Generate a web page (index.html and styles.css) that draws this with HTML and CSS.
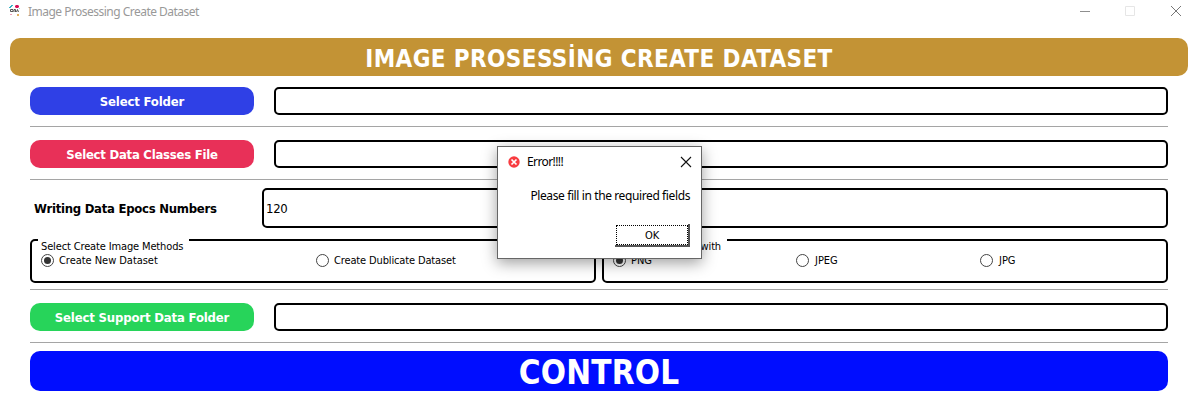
FILE: index.html
```
<!DOCTYPE html>
<html lang="en">
<head>
<meta charset="utf-8">
<title>Image Prosessing Create Dataset</title>
<link rel="stylesheet" href="styles.css">
</head>
<body>
<div class="window">
  <header class="titlebar">
    <svg class="app-icon" width="12" height="12" viewBox="0 0 12 12"><path fill="#35b5c5" d="M1 1h2v1H1zM0 2h2v1H0zM2 0h2v1H2z"/><path fill="#d80f55" d="M6 1l1-1h2l1 1v1L9 3H7L6 2z"/><path fill="#d80f55" opacity=".4" d="M1 9h2v1H1z"/><path fill="none" stroke="#555" d="M4 4.500H1.500v2H4V5M5 7V4.500h1.500V7M7.500 7L8.500 4.500L9.500 7"/><path fill="#e2b060" d="M8 9h2v2H8z"/><path fill="#9bd5db" d="M10 3h1v1h-1z"/></svg>
    <span class="app-name">Image Prosessing Create Dataset</span>
    <svg class="controls" width="102" height="12" viewBox="0 0 102 12" fill="none"><path stroke="#8f8f8f" d="M0 6.500h10"/><path stroke="#e6e6e6" d="M45.500 1.500h9v9h-9z"/><path stroke="#777" d="M91 1l10 10M101 1L91 11"/></svg>
  </header>
  <h1 class="banner"><span class="t-banner">IMAGE PROSESSİNG CREATE DATASET</span></h1>
  <main class="form">
    <div class="row"><button class="pick blue"><span class="t-folder">Select Folder</span></button><div class="field"></div></div>
    <div class="rule"></div>
    <div class="row second"><button class="pick red"><span class="t-classes">Select Data Classes File</span></button><div class="field"></div></div>
    <div class="rule"></div>
    <div class="epochs"><label><span class="t-epochs">Writing Data Epocs Numbers</span></label><div class="field"><span class="t-num">120</span></div></div>
    <div class="groups">
      <section class="group methods">
        <div class="legend"><span class="t-methods">Select Create Image Methods</span></div>
        <div class="options"><label class="option"><i class="radio on"></i><span class="t-new">Create New Dataset</span></label><label class="option"><i class="radio"></i><span class="t-dup">Create Dublicate Dataset</span></label></div>
      </section>
      <section class="group formats">
        <div class="legend"><span class="t-with">with</span></div>
        <div class="options"><label class="option"><i class="radio on"></i><span class="t-png">PNG</span></label><label class="option"><i class="radio"></i><span class="t-jpeg">JPEG</span></label><label class="option"><i class="radio"></i><span class="t-jpg">JPG</span></label></div>
      </section>
    </div>
    <div class="rule"></div>
    <div class="row second"><button class="pick green"><span class="t-support">Select Support Data Folder</span></button><div class="field"></div></div>
    <div class="rule"></div>
    <button class="control"><span class="t-control">CONTROL</span></button>
  </main>
  <div class="dialog">
    <div class="dialog-head">
      <svg width="12" height="12" viewBox="0 0 12 12"><circle cx="6" cy="6" r="5.700" fill="#f83c40"/><path d="M3.500 3.500l5 5M8.500 3.500l-5 5" stroke="#fff" stroke-width="1.700"/></svg>
      <span class="t-error">Error!!!!</span>
      <svg class="close" width="12" height="12" viewBox="0 0 12 12"><path d="M1 1l10 10M11 1L1 11" stroke="#111" stroke-width="1.100"/></svg>
    </div>
    <p class="message"><span class="t-message">Please fill in the required fields</span></p>
    <button class="ok"><span class="ok-focus"><span class="t-ok">OK</span></span></button>
  </div>
</div>
</body>
</html>
```
FILE: styles.css
```
* { box-sizing: border-box; }
body { margin: 0; background: #fff; color: #000; font: 11px/14px "DejaVu Sans Condensed", "DejaVu Sans", sans-serif; }
button { display: flex; align-items: center; justify-content: center; margin: 0; padding: 0; border: 0; font: inherit; }
span { white-space: nowrap; }
svg { display: block; flex: none; }
.window { position: relative; width: 1199px; height: 406px; overflow: hidden; }
.titlebar { display: flex; align-items: center; height: 24px; padding: 0 17px 0 9px; color: #999; font: 12px/16px "Noto Sans", sans-serif; }
.app-name { letter-spacing: -.52px; }
.app-icon { margin: -3px 7px 0 0; }
.controls { margin: -2px 0 0 auto; }
.banner { display: flex; align-items: center; justify-content: center; width: 1178px; height: 38px; margin: 14px 0 0 10px; padding-top: 3px; border-radius: 10px; background: #c39335; color: #fff; font-size: 24px; line-height: 30px; letter-spacing: .4px; }
.form { width: 1138px; margin: 11px 0 0 30px; }
.row { display: flex; gap: 20px; height: 28px; margin-bottom: 11px; }
.second { margin-top: 13px; }
.pick { width: 224px; height: 28px; padding-top: 1px; border-radius: 10px; color: #fff; font-size: 13px; font-weight: bold; letter-spacing: -.16px; }
.blue { background: #2f40e6; }
.red { background: #e83058; letter-spacing: -.25px; }
.green { background: #27d45a; }
.field { flex: 1; border: 2px solid #000; border-radius: 5px; }
.rule { height: 1px; background: #a5a5a5; }
.epochs { display: flex; height: 40px; margin-top: 8px; align-items: stretch; }
.epochs label { display: flex; align-items: center; width: 232px; padding: 2px 0 0 4px; font-size: 13px; font-weight: bold; letter-spacing: -.27px; }
.epochs .field { display: flex; align-items: center; padding: 2px 0 0 2px; font-size: 13px; letter-spacing: -.3px; }
.groups { display: grid; grid-template-columns: 566px 566px; gap: 6px; margin: 11px 0 6px; }
.group { height: 44px; border: 2px solid #000; border-radius: 5px; }
.legend { display: flex; width: 151px; height: 15px; margin: -2px 0 0 6px; padding: 1px 3px 0; background: #fff; letter-spacing: -.14px; }
.formats .legend { width: 117px; justify-content: flex-end; padding-right: 6px; }
.options { display: grid; grid-template-columns: 275px 1fr; padding-left: 9px; }
.formats .options { grid-template-columns: 183px 184px 1fr; }
.option { display: flex; gap: 5px; height: 13px; align-items: center; }
.option span { padding-top: 1px; letter-spacing: -.04px; }
.option .t-dup { letter-spacing: -.14px; }
.option .t-jpeg, .option .t-jpg { padding-left: 1px; }
.radio { display: flex; width: 13px; height: 13px; border: 1px solid #444; border-radius: 50%; background: #fff; }
.radio.on::after { content: ""; width: 7px; height: 7px; margin: 2px; border-radius: 50%; background: #333; }
.control { width: 1138px; height: 40px; margin-top: 8px; padding-top: 3px; border-radius: 10px; background: #000dff; color: #fff; font-size: 33px; line-height: 37px; font-weight: bold; letter-spacing: .2px; }
.dialog { position: absolute; left: 497px; top: 146px; width: 205px; height: 113px; padding: 0 11px; border: 1px solid #666; background: #fff; box-shadow: 0 4px 14px rgba(0, 0, 0, .38); font: 12px/16px "Noto Sans", sans-serif; letter-spacing: -.39px; }
.dialog-head { display: flex; align-items: center; gap: 7px; height: 29px; margin: 0 -2px 0 -1px; letter-spacing: -.6px; }
.close { margin-left: auto; }
.message { display: flex; justify-content: flex-end; margin: 12px 0 0; }
.ok { width: 75px; height: 23px; margin: 20px 0 0 auto; border: solid #555; border-width: 0 2px 2px 0; background: #fff; color: #000; }
.ok-focus { display: flex; align-items: center; justify-content: center; width: 72px; height: 20px; margin: 1px 0 0 1px; padding-top: 2px; border: 1px dotted #000; font: 11px/14px "DejaVu Sans Condensed", sans-serif; letter-spacing: -.2px; }
```
